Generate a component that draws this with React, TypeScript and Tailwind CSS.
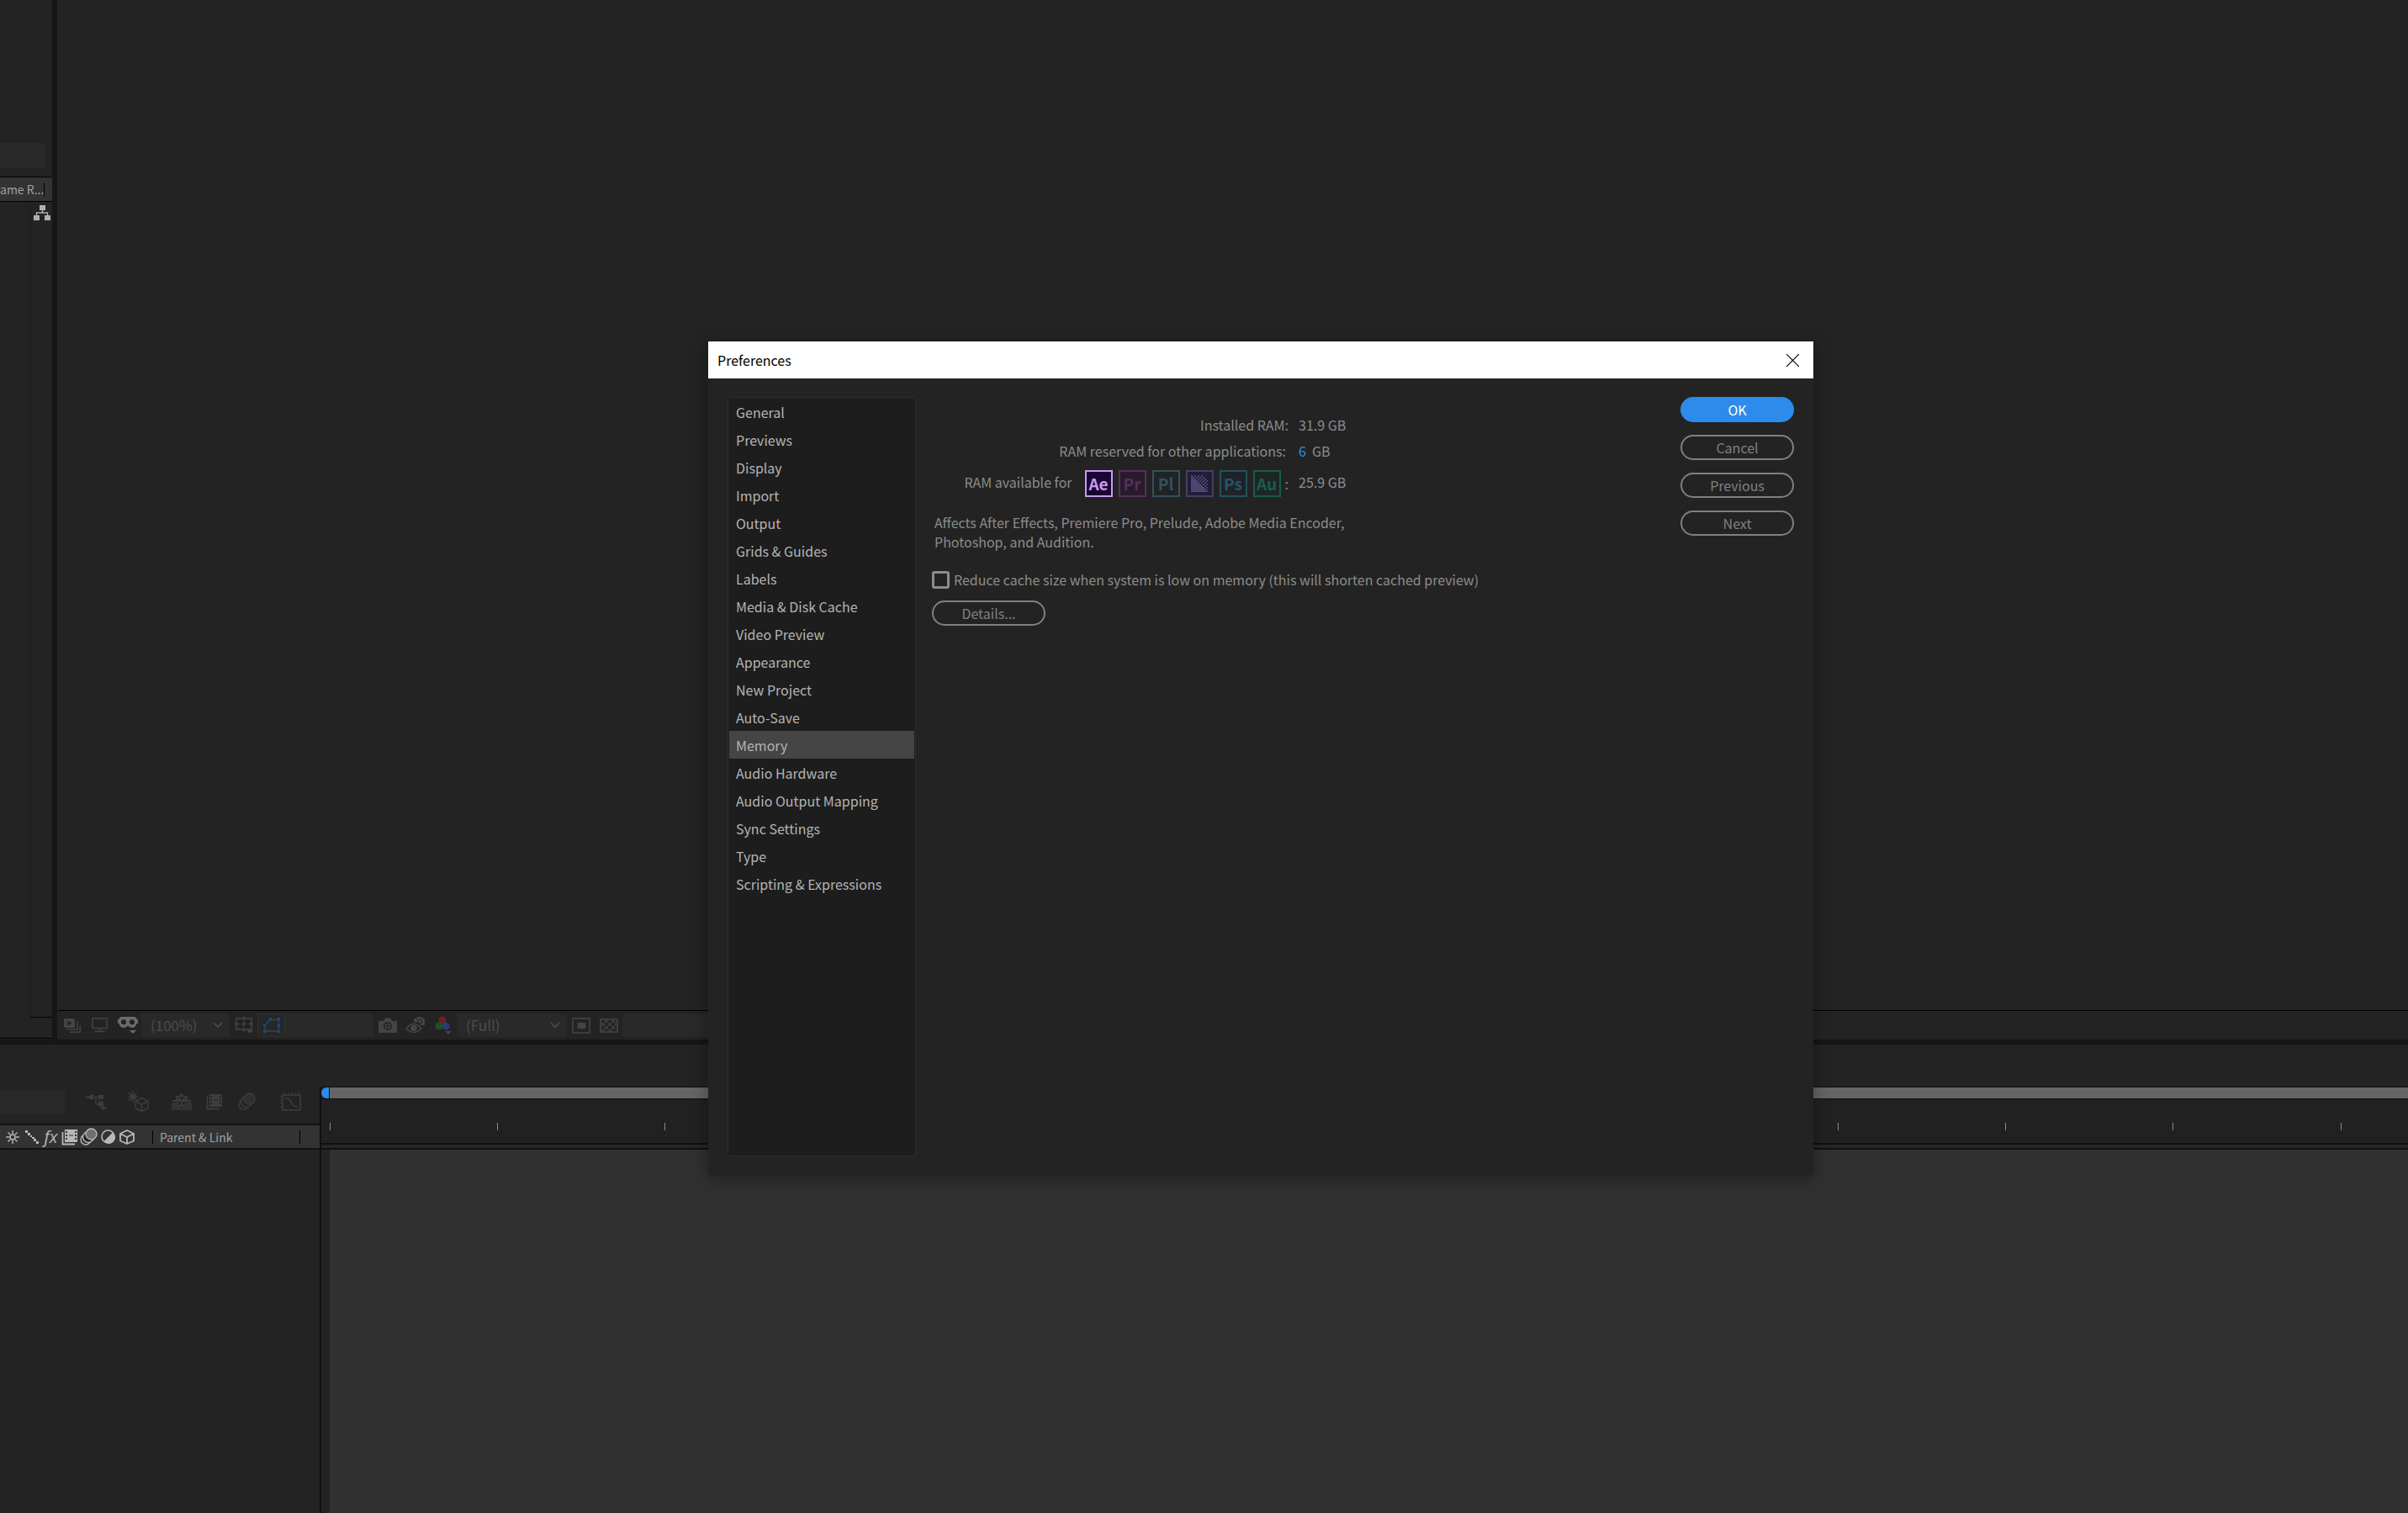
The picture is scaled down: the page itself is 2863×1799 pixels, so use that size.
import { useState, type ReactNode } from "react";

const categories = [
  "General",
  "Previews",
  "Display",
  "Import",
  "Output",
  "Grids & Guides",
  "Labels",
  "Media & Disk Cache",
  "Video Preview",
  "Appearance",
  "New Project",
  "Auto-Save",
  "Memory",
  "Audio Hardware",
  "Audio Output Mapping",
  "Sync Settings",
  "Type",
  "Scripting & Expressions",
];

const apps = [
  { label: "Ae", className: "border-[#c79bf0] bg-[#1a0433] text-[#c79bf0] shadow-md" },
  { label: "Pr", className: "border-[#55305c] bg-[#2a1a2c] text-[#55305c]" },
  { label: "Pl", className: "border-[#37505a] bg-[#1e2427] text-[#37505a]" },
  { label: "Me", className: "border-[#453f63] bg-[#221d38] text-[#4b4570]" },
  { label: "Ps", className: "border-[#25505f] bg-[#1d2329] text-[#2a5365]" },
  { label: "Au", className: "border-[#1d5a4a] bg-[#1c2725] text-[#1d5a4a]" },
];

interface IconProps {
  w: number;
  h: number;
  className?: string;
  children: ReactNode;
}

function Icon({ w, h, className = "", children }: IconProps) {
  return (
    <svg
      width={w}
      height={h}
      viewBox={`0 0 ${w} ${h}`}
      fill="none"
      stroke="currentColor"
      className={`shrink-0 ${className}`}
      aria-hidden="true"
    >
      {children}
    </svg>
  );
}

function Caret({ x, y }: { x: number; y: number }) {
  return <path d={`M${x} ${y}h8l-4 4z`} fill="currentColor" stroke="none" />;
}

function ToolButton({ label, className = "text-[#444444]", children }: { label: string; className?: string; children: ReactNode }) {
  return (
    <button
      type="button"
      aria-label={label}
      className={`flex h-7 w-[33px] shrink-0 items-center justify-center ${className}`}
    >
      {children}
    </button>
  );
}

function ToolSelect({ label, value, className }: { label: string; value: string; className: string }) {
  return (
    <div className={`relative shrink-0 ${className}`}>
      <select
        aria-label={label}
        className="h-7 w-full appearance-none rounded-[3px] bg-[#292929] pl-[11px] text-[17px] leading-7 text-[#4c4c4c]"
      >
        <option>{value}</option>
      </select>
      <Icon w={12} h={8} className="pointer-events-none absolute top-2.5 right-2 text-[#4c4c4c]">
        <path d="M1 1l5 5 5-5" strokeWidth="1.6" />
      </Icon>
    </div>
  );
}

function FilmIcon({ className = "" }: { className?: string }) {
  return (
    <Icon w={20} h={20} className={className}>
      <path d="M1.5 4v14.5H16" strokeWidth="1.8" />
      <path
        fillRule="evenodd"
        fill="currentColor"
        stroke="none"
        d="M4 1h15v15H4zM5 3v2h2V3zM5 7v2h2V7zM5 11v2h2v-2zM16 3v2h2V3zM16 7v2h2V7zM16 11v2h2v-2zM9 7.500h5v1H9z"
      />
    </Icon>
  );
}

function BlurIcon({ fill, className = "" }: { fill: string; className?: string }) {
  return (
    <Icon w={21} h={21} className={className}>
      <circle cx="7" cy="14" r="6" strokeWidth="1.400" />
      <circle cx="10" cy="11" r="6.500" strokeWidth="1.400" className="fill-[#232323]" />
      <circle cx="13.500" cy="7.500" r="6.500" strokeWidth="1.400" fill={fill} />
    </Icon>
  );
}

function ProjectStrip() {
  return (
    <aside className="flex w-[62px] shrink-0 flex-col overflow-hidden pt-[170px]">
      <div className="h-[30px] w-[54px] rounded-r-sm bg-[#292929]" />
      <div className="mt-2.5 flex h-[30px] items-center border-y border-black bg-[#333333] pr-[9px]">
        <span className="w-[52px] shrink-0 overflow-hidden text-[14px] leading-5 whitespace-nowrap text-[#a0a0a0]">ame R...</span>
        <span className="h-4 w-px shrink-0 bg-black" />
      </div>
      <div className="ml-9 flex flex-1 justify-center border-b border-l border-b-black border-l-[#1e1e1e] pt-[3px]">
        <Icon w={20} h={20} className="text-[#b0b0b0]">
          <path d="M7 1h7v6H7zM0 13h7v6H0zM13 13h7v6h-7z" fill="currentColor" stroke="none" />
          <path d="M10.500 6v4M3.500 13v-3h13v3" strokeWidth="1.400" />
        </Icon>
      </div>
      <div className="mb-px h-[25px] border-b border-black" />
    </aside>
  );
}

function ViewerToolbar() {
  return (
    <div className="ml-px flex h-[35px] items-center overflow-hidden border-t border-black">
      <ToolButton label="Always preview this view">
        <Icon w={21} h={18}>
          <rect x="1" y="1" width="13" height="11" fill="currentColor" stroke="none" />
          <path d="M5.500 3.500l5 3-5 3z" fill="#232323" stroke="none" />
          <path d="M4 14h13V4M8 17.200h12.200V9" strokeWidth="1.400" />
        </Icon>
      </ToolButton>
      <ToolButton label="Primary viewer">
        <Icon w={19} h={18}>
          <rect x="1" y="1" width="17" height="11.500" strokeWidth="1.500" />
          <path d="M9.500 12.500V16M3.500 16.500h12" strokeWidth="1.500" />
        </Icon>
      </ToolButton>
      <ToolButton label="3D view" className="text-[#6a6a6a]">
        <Icon w={24} h={22}>
          <path
            fillRule="evenodd"
            fill="currentColor"
            stroke="none"
            d="M5 1h14q3 0 3.500 3H24v5h-1.500q-1 5-5.500 5-3 0-4-2h-2q-1 2-4 2-4.500 0-5.500-5H0V4h1.500Q2 1 5 1zM7 4.200a3 3 0 1 0 0 6 3 3 0 0 0 0-6zM17 4.200a3 3 0 1 0 0 6 3 3 0 0 0 0-6z"
          />
          <Caret x={14} y={17} />
        </Icon>
      </ToolButton>
      <ToolSelect label="Magnification" value="(100%)" className="w-[105px]" />
      <ToolButton label="Grid and guide options">
        <Icon w={22} h={22}>
          <rect x="2" y="3" width="18" height="13" strokeWidth="1.500" />
          <path d="M11 0v6M11 13v6M0 9.500h5M17 9.500h5M8.500 9.500h5M11 7v5" strokeWidth="1.400" />
          <Caret x={14} y={17} />
        </Icon>
      </ToolButton>
      <ToolButton label="Toggle mask visibility" className="rounded-[3px] border border-[#303030] bg-[#272727] text-[#24486e]">
        <Icon w={22} h={20}>
          <path d="M3 17V10.500L9 3.500H19V17z" strokeWidth="1.400" />
          <path d="M8 1h3v4H8zM18 1h3v4h-3zM1 9h3v3H1zM18 9h3v3h-3zM1 16h3v3H1zM18 16h3v3h-3z" fill="currentColor" stroke="none" />
        </Icon>
      </ToolButton>
      <div className="h-7 w-[105px] shrink-0 rounded-r-[3px] bg-[#292929]" />
      <ToolButton label="Take snapshot">
        <Icon w={22} h={18}>
          <path
            fillRule="evenodd"
            fill="currentColor"
            stroke="none"
            d="M0 4h6l2-3.500h6L16 4h6v14H0zM11 5a5 5 0 1 0 0 10 5 5 0 0 0 0-10z"
          />
          <circle cx="11" cy="10" r="2.500" strokeWidth="1.600" />
        </Icon>
      </ToolButton>
      <ToolButton label="Show snapshot">
        <Icon w={23} h={20}>
          <path d="M1 14q9-11 18 0-9 9-18 0z" strokeWidth="1.600" />
          <circle cx="10" cy="13.500" r="3.800" fill="currentColor" stroke="none" />
          <path d="M10 2h3l1.500-2h5L21 2h2v8h-4l-5-3-4-1z" fill="currentColor" stroke="none" />
          <circle cx="17" cy="5.500" r="2.500" strokeWidth="1.200" className="fill-[#444444] stroke-[#232323]" />
        </Icon>
      </ToolButton>
      <ToolButton label="Show channel">
        <Icon w={20} h={22}>
          <g stroke="none">
            <circle cx="9" cy="5" r="4.500" fill="#6b2020" />
            <circle cx="5" cy="12" r="4.500" fill="#1f521f" />
            <circle cx="13" cy="12" r="4.500" fill="#2d3c70" />
          </g>
          <Caret x={12} y={18} />
        </Icon>
      </ToolButton>
      <ToolSelect label="Resolution" value="(Full)" className="w-[131px]" />
      <ToolButton label="Region of interest">
        <Icon w={22} h={19}>
          <rect x="1" y="1" width="20" height="17" strokeWidth="1.600" />
          <rect x="6.500" y="6" width="10" height="7" fill="currentColor" stroke="none" />
        </Icon>
      </ToolButton>
      <ToolButton label="Toggle transparency grid">
        <Icon w={22} h={17}>
          <rect x="1" y="1" width="20" height="15" strokeWidth="1.600" />
          <path
            d="M6 1h4v4H6zM14 1h4v4h-4zM2 5h4v4H2zM10 5h4v4h-4zM18 5h3v4h-3zM6 9h4v4H6zM14 9h4v4h-4zM2 13h4v3H2zM10 13h4v3h-4z"
            fill="#3a3a3a"
            stroke="none"
          />
        </Icon>
      </ToolButton>
      <div className="h-7 w-[105px] shrink-0 rounded-l-[3px] bg-[#292929]" />
    </div>
  );
}

function TimelineControls() {
  return (
    <div className="flex h-[94px] items-center pt-[41px] text-[#3d3d3d]">
      <div className="h-[30px] w-[78px] rounded-r-sm bg-[#282828]" />
      <button type="button" aria-label="Mini-flowchart" className="ml-[11px] flex w-[50px] justify-center">
        <Icon w={26} h={20}>
          <path d="M0 4.500h17M13 4.500v8.500h4" strokeWidth="1.500" />
          <path d="M3 4.500l4-3h3v6H7zM16 2h6v5h-6zM16 9.500h6v6h-6z" fill="currentColor" stroke="none" />
          <Caret x={18} y={16} />
        </Icon>
      </button>
      <button type="button" aria-label="Draft 3D" className="flex w-[50px] justify-center">
        <Icon w={26} h={26}>
          <path d="M7 0v14M0 7h14M2 2l10 10M12 2L2 12" strokeWidth="1.200" />
          <circle cx="7" cy="7" r="3.500" fill="currentColor" stroke="none" />
          <path d="M17.500 8.500l7.500 4v8l-7.500 4-7.500-4v-8zM10 12.500l7.500 4 7.500-4M17.500 16.500v8" strokeWidth="1.500" className="fill-[#232323]" />
        </Icon>
      </button>
      <button type="button" aria-label="Hide shy layers" className="ml-2 flex w-[38px] justify-center">
        <Icon w={24} h={20}>
          <path d="M0 11h9v2h2v5h2v-5h2v-2h9v9H0z" fill="#333333" stroke="none" />
          <path d="M6 9q0-6 6-6t6 6" strokeWidth="2" />
          <path d="M12 3V0M6.500 5L5 3M17.500 5L19 3M1 9h22M12 8v8" strokeWidth="1.800" />
          <circle cx="9.500" cy="7" r="1.600" fill="currentColor" stroke="none" />
          <circle cx="14.500" cy="7" r="1.600" fill="currentColor" stroke="none" />
        </Icon>
      </button>
      <button type="button" aria-label="Frame blending" className="flex w-[39px] justify-center">
        <FilmIcon />
      </button>
      <button type="button" aria-label="Motion blur" className="flex w-[39px] justify-center">
        <BlurIcon fill="#2f2f2f" />
      </button>
      <button type="button" aria-label="Graph editor" className="ml-3 flex w-[40px] justify-center">
        <Icon w={25} h={24}>
          <rect x="3" y="4" width="21" height="18" strokeWidth="1.600" />
          <path d="M6 8q5 0 7.500 5t7.500 5" strokeWidth="1.600" />
          <path d="M5 0v3M10 1v2M14 0v3M18 1v2M22 0v3M0 6h2M0 10h2M0 14h2M0 18h2" strokeWidth="1.200" />
        </Icon>
      </button>
    </div>
  );
}

function LayerHeader() {
  return (
    <div className="flex h-[31px] items-center border-y-2 border-[#121212] bg-[#333333] text-[#b8b8b8]">
      <div className="ml-1 grid w-[158px] shrink-0 grid-cols-7 items-center justify-items-center">
        <Icon w={16} h={16}>
          <circle cx="8" cy="8" r="3" strokeWidth="1.600" />
          <path d="M8 0v4M8 12v4M0 8h4M12 8h4M2.500 2.500l2.500 2.500M11 11l2.500 2.500M13.500 2.500L11 5M5 11l-2.500 2.500" strokeWidth="1.400" />
        </Icon>
        <Icon w={16} h={16}>
          <path d="M0 0h3v3H0zM3 3h3v3H3zM6 6h2v2H6zM8 8h3v2H8zM10 10h3v3h-3zM13 13h3v3h-3z" fill="currentColor" stroke="none" />
        </Icon>
        <span className="font-['Open_Sans',sans-serif] text-[20px] leading-5 italic">fx</span>
        <FilmIcon />
        <BlurIcon fill="#6e6e6e" />
        <Icon w={17} h={17}>
          <circle cx="8.500" cy="8.500" r="7.500" strokeWidth="1.600" />
          <path d="M14 3.500A7.500 7.500 0 1 1 3.500 14z" fill="currentColor" stroke="none" />
        </Icon>
        <Icon w={18} h={18}>
          <path d="M9 1l8 4v8.500L9 17l-8-3.500V5zM1 5l8 4 8-4M9 9v8" strokeWidth="1.800" strokeLinejoin="round" />
        </Icon>
      </div>
      <span className="ml-[19px] h-4 w-px bg-black" />
      <span className="ml-2 flex-1 text-[14px] leading-5 text-[#a0a0a0]">Parent &amp; Link</span>
      <span className="mr-[23px] h-4 w-px bg-black" />
    </div>
  );
}

function Timeline() {
  const ticks = Array.from({ length: 14 }, (_, i) => i);

  return (
    <section className="flex h-[557px] shrink-0">
      <div className="flex w-[380px] shrink-0 flex-col">
        <TimelineControls />
        <LayerHeader />
      </div>
      <div className="flex min-w-0 flex-1 flex-col pt-[50px]">
        <div className="flex flex-1 flex-col border-l-2 border-[#101010]">
          <div className="flex h-[15px] border-y border-[#101010]">
            <div className="w-[9px] rounded-l-full bg-[#2d8ceb]" />
            <div className="flex-1 border-l border-[#101010] bg-[#656565]" />
          </div>
          <div className="flex h-[52px] items-end overflow-hidden bg-[#212121] pb-[15px] pl-2.5">
            <div className="-mr-[120px] flex flex-1 justify-between">
              {ticks.map((tick) => (
                <span key={tick} className="h-[9px] w-px bg-[#8a8a8a]" />
              ))}
            </div>
          </div>
          <div className="h-[8px] border-y-2 border-[#101010] bg-[#262626]" />
          <div className="flex flex-1 pl-2.5">
            <div className="flex-1 bg-[#303030]" />
          </div>
        </div>
      </div>
    </section>
  );
}

function AppBadge({ label, className }: { label: string; className: string }) {
  // Media Encoder uses a dithered triangle instead of letters
  if (label === "Me") {
    const cells = Array.from({ length: 100 }, (_, i) => ({ x: i % 10, y: Math.floor(i / 10) }));
    return (
      <span className={`flex h-8 w-[33px] items-center justify-center border-2 ${className}`}>
        <Icon w={20} h={20}>
          <g fill="currentColor" stroke="none">
            {cells
              .filter(({ x, y }) => x <= y || y === 9 || ((x + y) % 2 === 0 && x - y < 8))
              .map(({ x, y }) => (
                <rect key={`${x}-${y}`} x={x * 2} y={y * 2} width="2" height="2" />
              ))}
          </g>
        </Icon>
      </span>
    );
  }
  return (
    <span className={`flex h-8 w-[33px] items-center justify-center border-2 text-[19px] leading-7 font-bold ${className}`}>
      {label}
    </span>
  );
}

function PillButton({ children }: { children: ReactNode }) {
  return (
    <button
      type="button"
      className="flex h-[30px] w-[135px] items-center justify-center rounded-full border-2 border-[#808080] text-[#808080]"
    >
      {children}
    </button>
  );
}

function MemoryPane() {
  const [reduceCache, setReduceCache] = useState(false);

  return (
    <div className="ml-[19px] flex-1 pt-[17px] text-[#8c8c8c]">
      <dl className="grid grid-cols-[424px_auto] grid-rows-[32px_30px_47px] items-center gap-x-3">
        <dt className="text-right">Installed RAM:</dt>
        <dd>31.9 GB</dd>
        <dt className="pr-[3px] text-right">RAM reserved for other applications:</dt>
        <dd className="flex gap-[7px]">
          <button type="button" className="text-[#2d8ceb]">
            6
          </button>
          GB
        </dd>
        <dt className="flex items-center justify-end">
          <span className="mr-[15px] pb-1">RAM available for</span>
          <span className="flex gap-[7px]">
            {apps.map((app) => (
              <AppBadge key={app.label} label={app.label} className={app.className} />
            ))}
          </span>
          <span className="ml-[5px]">:</span>
        </dt>
        <dd className="pb-1">25.9 GB</dd>
      </dl>
      <p className="mt-3 ml-[3px] leading-[23px]">
        Affects After Effects, Premiere Pro, Prelude, Adobe Media Encoder,
        <br />
        Photoshop, and Audition.
      </p>
      <label className="mt-[22px] flex h-[22px] items-center gap-[5px]">
        <input
          type="checkbox"
          checked={reduceCache}
          onChange={(e) => setReduceCache(e.target.checked)}
          className="h-[21px] w-[21px] appearance-none rounded-[3px] border-[3px] border-[#8c8c8c] checked:bg-[#8c8c8c]"
        />
        Reduce cache size when system is low on memory (this will shorten cached preview)
      </label>
      <div className="mt-3.5">
        <PillButton>Details...</PillButton>
      </div>
    </div>
  );
}

function PreferencesDialog() {
  const [selected, setSelected] = useState("Memory");

  return (
    <div
      role="dialog"
      aria-labelledby="preferences-title"
      className="absolute top-[406px] left-[842px] flex h-[991px] w-[1314px] flex-col bg-[#232323] text-[16px] leading-5 shadow-[0_4px_18px_rgba(0,0,0,0.35)]"
    >
      <header className="flex h-11 shrink-0 items-center justify-between bg-white pr-[17px] pl-[11px] text-black">
        <h1 id="preferences-title">Preferences</h1>
        <button type="button" aria-label="Close">
          <Icon w={15} h={15}>
            <path d="M0 0l15 15M15 0L0 15" strokeWidth="1.200" />
          </Icon>
        </button>
      </header>
      <div className="flex flex-1 px-[23px] py-[22px]">
        <nav className="w-56 rounded-[3px] border border-[#2f2f2f] bg-[#1d1d1d] px-px">
          {categories.map((name) => (
            <button
              key={name}
              type="button"
              onClick={() => setSelected(name)}
              className={`block h-[33px] w-full pl-2 text-left text-[#b4b4b4] ${selected === name ? "bg-[#454545]" : ""}`}
            >
              {name}
            </button>
          ))}
        </nav>
        <MemoryPane />
        <div className="flex flex-col gap-[15px]">
          <button type="button" className="h-[30px] w-[135px] rounded-full bg-[#2d8ceb] text-white">
            OK
          </button>
          <PillButton>Cancel</PillButton>
          <PillButton>Previous</PillButton>
          <PillButton>Next</PillButton>
        </div>
      </div>
    </div>
  );
}

export default function App() {
  return (
    <div className="relative flex h-screen min-h-[1400px] flex-col overflow-hidden bg-[#232323] font-['Noto_Sans_CJK_SC',sans-serif]">
      <div className="flex min-h-0 flex-1">
        <ProjectStrip />
        <div className="w-1.5 shrink-0 bg-[#161616]" />
        <main className="flex min-w-0 flex-1 flex-col justify-end">
          <ViewerToolbar />
        </main>
      </div>
      <div className="h-1.5 shrink-0 bg-[#161616]" />
      <Timeline />
      <PreferencesDialog />
    </div>
  );
}
